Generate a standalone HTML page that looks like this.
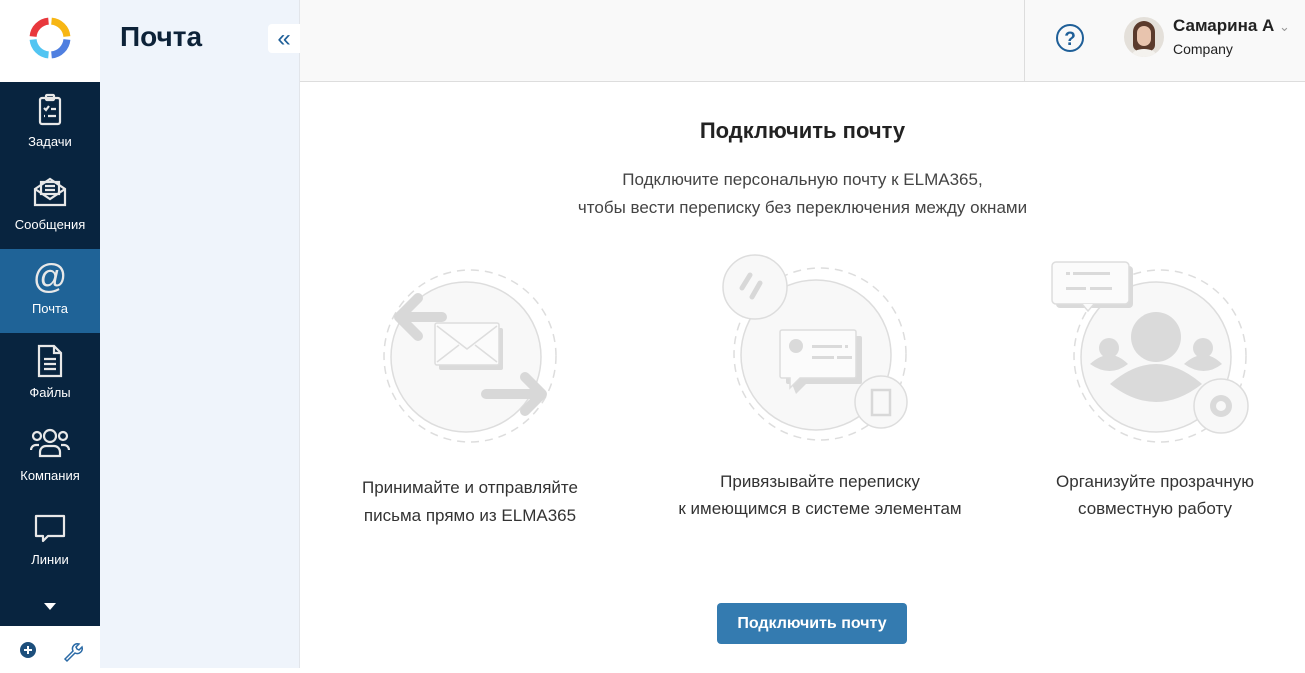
<!DOCTYPE html>
<html><head><meta charset="utf-8"><style>
*{margin:0;padding:0;box-sizing:border-box}
body{width:1305px;height:668px;overflow:hidden;font-family:"Liberation Sans",sans-serif;background:#fff;position:relative}
.sb{position:absolute;left:0;top:0;width:100px;height:668px;background:#08243f}
.logo{position:absolute;left:0;top:0;width:100px;height:82px;background:#fff}
.nav{position:absolute;left:0;width:100px;height:84px;color:#fff;font-size:13px;text-align:center}
.nav svg{position:absolute;left:32px;top:10px}
.nav span{position:absolute;left:0;right:0;top:52px}
.act{background:#1f6397}
.bot{position:absolute;left:0;top:626px;width:100px;height:42px;background:#fff}
.p2{position:absolute;left:100px;top:0;width:200px;height:668px;background:#eff4fb;border-right:1px solid #e2e5ea}
.hd{position:absolute;left:300px;top:0;width:1005px;height:82px;background:#f9f9f9;border-bottom:1px solid #ddd}
.c{position:absolute;text-align:center;color:#333}
</style></head><body>
<div class="sb"></div>
<div class="logo"><svg width="100" height="82" viewBox="0 0 100 82"><g fill="none" stroke-width="7">
<path d="M33.1 36.5A17 17 0 0 1 48.5 21.1" stroke="#e8383d"/>
<path d="M51.5 21.1A17 17 0 0 1 66.9 36.5" stroke="#f7b614"/>
<path d="M66.9 39.5A17 17 0 0 1 51.5 54.9" stroke="#4f7fe0"/>
<path d="M48.5 54.9A17 17 0 0 1 33.1 39.5" stroke="#52c5f2"/></g></svg></div>
<div class="nav" style="top:82px"><svg width="36" height="36" viewBox="0 0 36 36" fill="none" stroke="#e8e8e8" stroke-width="2.2"><rect x="8" y="6" width="20" height="26" rx="2"/><rect x="14" y="3" width="8" height="5" rx="1"/><path d="M12 16l2 2 3-4M19 17h5M12 24h1M16 24h8"/></svg><span>Задачи</span></div>
<div class="nav" style="top:165px"><svg width="36" height="36" viewBox="0 0 36 36" fill="none" stroke="#e8e8e8" stroke-width="2.2"><path d="M3 14l15-10 15 10v16H3z"/><path d="M3 14l15 10 15-10"/><rect x="9" y="7" width="18" height="12"/><path d="M13 11h10M13 15h10"/></svg><span>Сообщения</span></div>
<div class="nav act" style="top:249px"><svg width="36" height="36" viewBox="0 0 36 36"><text x="18" y="29" text-anchor="middle" font-size="34" fill="#e8e8e8" font-family="Liberation Sans">@</text></svg><span>Почта</span></div>
<div class="nav" style="top:333px"><svg width="36" height="36" viewBox="0 0 36 36" fill="none" stroke="#e8e8e8" stroke-width="2.2"><path d="M7 3h15l7 7v23H7z"/><path d="M22 3v7h7M12 16h12M12 21h12M12 26h12"/></svg><span>Файлы</span></div>
<div class="nav" style="top:416px"><svg width="40" height="36" viewBox="0 0 40 36" fill="none" stroke="#e8e8e8" stroke-width="2.2" style="left:30px"><circle cx="20" cy="10" r="6"/><circle cx="7" cy="10" r="4"/><circle cx="33" cy="10" r="4"/><path d="M10 30v-4a6 6 0 0 1 6-6h8a6 6 0 0 1 6 6v4zM1 24a5 5 0 0 1 5-5h3M39 24a5 5 0 0 0-5-5h-3"/></svg><span>Компания</span></div>
<div class="nav" style="top:500px"><svg width="36" height="36" viewBox="0 0 36 36" fill="none" stroke="#e8e8e8" stroke-width="2.2"><path d="M4 6h28v20H16l-5 5v-5H4z" stroke-linejoin="round"/></svg><span>Линии</span></div>
<svg style="position:absolute;left:44px;top:603px" width="12" height="7"><path d="M0 0h12L6 7z" fill="#fff"/></svg>
<div class="bot"><svg width="100" height="42"><circle cx="28" cy="24" r="8" fill="#1d4f7c"/><path d="M24 24h8M28 20v8" stroke="#fff" stroke-width="2"/><path d="M65 33l8-8a5 5 0 0 1 6-7l-3 3 1 2 2 1 3-3a5 5 0 0 1-7 6l-8 8z" fill="none" stroke="#2a6aa6" stroke-width="1.5"/></svg></div>
<div class="p2"><div style="position:absolute;left:20px;top:21px;font-size:28px;font-weight:bold;color:#0d2238">Почта</div>
<div style="position:absolute;left:168px;top:24px;width:32px;height:29px;background:#fff;border-radius:4px 0 0 4px;color:#1f5f98;font-size:24px;line-height:29px;text-align:center">«</div></div>
<div class="hd"><div style="position:absolute;left:724px;top:0;width:1px;height:82px;background:#ddd"></div>
<svg style="position:absolute;left:755px;top:23px" width="30" height="30"><circle cx="15" cy="15" r="13" fill="none" stroke="#1f5f98" stroke-width="2"/><text x="15" y="22" text-anchor="middle" font-size="19" font-weight="bold" fill="#1f5f98" font-family="Liberation Sans">?</text></svg>
<div style="position:absolute;left:824px;top:17px;width:40px;height:40px;border-radius:50%;overflow:hidden;background:#e4e0da"><div style="position:absolute;left:9px;top:4px;width:22px;height:30px;border-radius:11px 11px 6px 6px;background:#5a3a2c"></div><div style="position:absolute;left:13px;top:9px;width:14px;height:20px;border-radius:7px;background:#e8c4ae"></div><div style="position:absolute;left:8px;top:32px;width:24px;height:12px;border-radius:50%;background:#f4f2ee"></div></div>
<div style="position:absolute;left:873px;top:16px;font-size:17px;font-weight:bold;color:#222">Самарина А <span style="font-weight:normal;color:#999;font-size:13px">&#8964;</span></div>
<div style="position:absolute;left:873px;top:41px;font-size:14px;color:#222">Company</div></div>
<div class="c" style="left:300px;width:1005px;top:118px;font-size:22px;font-weight:bold;color:#222">Подключить почту</div>
<div class="c" style="left:300px;width:1005px;top:166px;font-size:17px;line-height:28px;color:#444">Подключите персональную почту к ELMA365,<br>чтобы вести переписку без переключения между окнами</div>
<svg style="position:absolute;left:300px;top:250px" width="1005" height="220" fill="none">
<g stroke="#ddd" stroke-width="1.5">
<circle cx="166" cy="107" r="75" fill="#f8f8f8"/><circle cx="170" cy="106" r="86" stroke-dasharray="8 6"/>
<circle cx="516" cy="105" r="75" fill="#f8f8f8"/><circle cx="520" cy="104" r="86" stroke-dasharray="8 6"/>
<circle cx="856" cy="107" r="75" fill="#f8f8f8"/><circle cx="860" cy="106" r="86" stroke-dasharray="8 6"/>
<circle cx="455" cy="37" r="32" fill="#f8f8f8"/><circle cx="581" cy="152" r="26" fill="#f8f8f8"/>
<circle cx="921" cy="156" r="27" fill="#f8f8f8"/>
</g>
<g fill="#dadada"><rect x="139" y="78" width="64" height="42" rx="2"/><rect x="486" y="86" width="76" height="48" rx="2"/><path d="M492 134h14l-10 10z"/><rect x="756" y="16" width="77" height="42" rx="4"/></g>
<g stroke="#ddd" stroke-width="1.5">
<rect x="135" y="73" width="64" height="42" rx="2" fill="#fbfbfb"/><path d="M137 76l30 23 30-23M137 112l22-17M197 112l-22-17"/>
<path d="M482 80h72a2 2 0 0 1 2 2v44a2 2 0 0 1-2 2H500l-10 10v-10h-8a2 2 0 0 1-2-2V82a2 2 0 0 1 2-2z" fill="#fbfbfb"/>
<rect x="752" y="12" width="77" height="42" rx="4" fill="#fbfbfb"/><path d="M782 54l6 7 6-7" fill="#fbfbfb"/>
</g>
<g fill="#dadada"><circle cx="496" cy="96" r="7"/><rect x="512" y="95" width="30" height="3"/><rect x="545" y="95" width="3" height="3"/><rect x="512" y="106" width="22" height="3"/><rect x="537" y="106" width="15" height="3"/>
<circle cx="856" cy="87" r="25"/><circle cx="809" cy="98" r="10"/><circle cx="903" cy="98" r="10"/>
<path d="M810 134q46-40 92 0q-46 36-92 0z"/><path d="M790 114q20-18 38 0q-18 14-38 0zM884 114q20-18 38 0q-18 14-38 0z"/>
<circle cx="921" cy="156" r="11"/><rect x="766" y="22" width="4" height="3"/><rect x="773" y="22" width="37" height="3"/><rect x="766" y="37" width="20" height="3"/><rect x="790" y="37" width="22" height="3"/></g>
<circle cx="921" cy="156" r="5" fill="#f8f8f8"/>
<g stroke="#d8d8d8" stroke-width="10" stroke-linecap="round" stroke-linejoin="round"><path d="M142 67H100M118 48l-19 19 19 19M186 144h54M225 127l17 17-17 17"/><path d="M450 25l-8 13M452 47l8-14" stroke-width="5"/></g>
<rect x="572" y="140" width="18" height="25" fill="none" stroke="#d8d8d8" stroke-width="2.5"/>
</svg>
<div class="c" style="left:330px;width:280px;top:474px;font-size:17px;line-height:28px">Принимайте и отправляйте<br>письма прямо из ELMA365</div>
<div class="c" style="left:660px;width:320px;top:468px;font-size:17px;line-height:27px">Привязывайте переписку<br>к имеющимся в системе элементам</div>
<div class="c" style="left:1020px;width:270px;top:468px;font-size:17px;line-height:27px">Организуйте прозрачную<br>совместную работу</div>
<div style="position:absolute;left:717px;top:603px;width:190px;height:41px;background:#347bb0;border-radius:4px;color:#fff;font-size:16px;font-weight:bold;text-align:center;line-height:41px">Подключить почту</div>
</body></html>
